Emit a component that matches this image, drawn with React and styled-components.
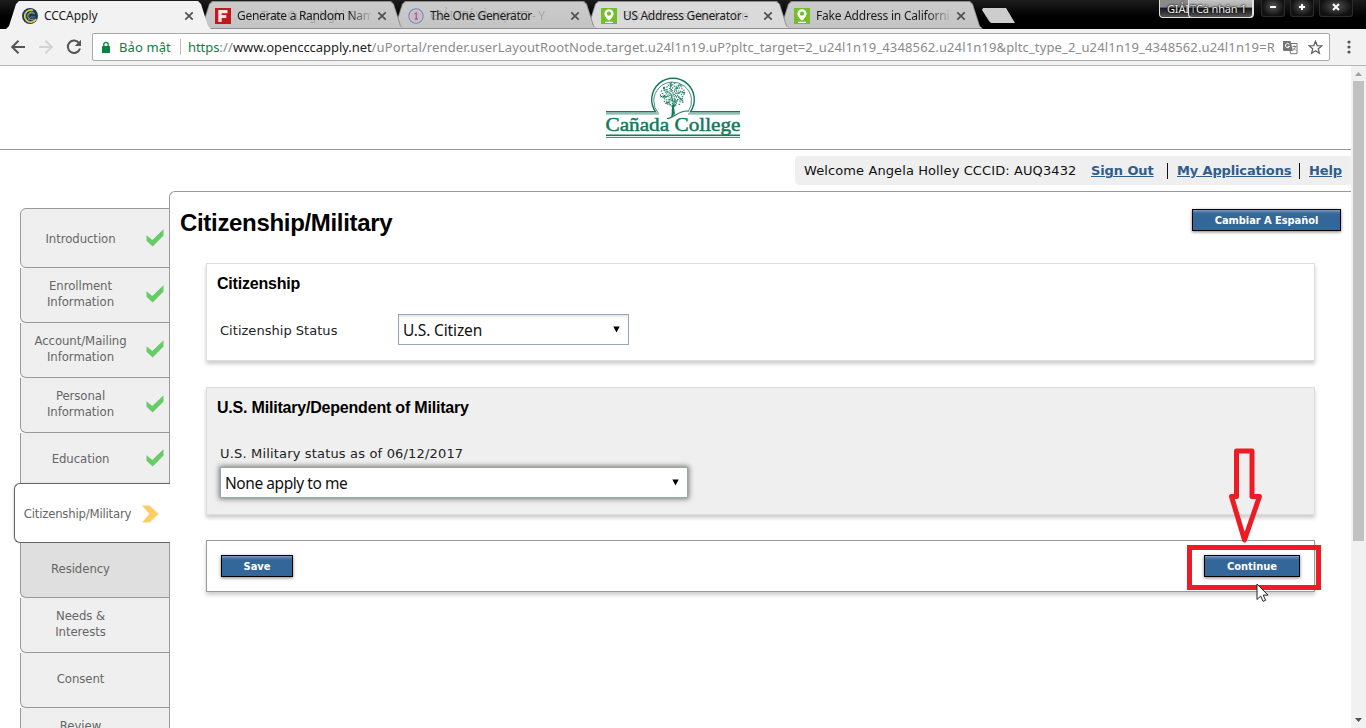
import React from "react";
import styled, { createGlobalStyle, css } from "styled-components";

const Global = createGlobalStyle`
  *{box-sizing:border-box}
  body{margin:0;background:#fff;overflow:hidden}
`;
const UI = `"Noto Sans","Open Sans",sans-serif`;
const TAHOMA = `"DejaVu Sans Condensed","DejaVu Sans",sans-serif`;
const VERDANA = `"DejaVu Sans",sans-serif`;
const ARIAL = `"Liberation Sans",Arial,sans-serif`;

const Screen = styled.div`
  position:relative;width:1366px;height:728px;overflow:hidden;
  display:flex;flex-direction:column;background:#fff;
`;

/* ---- tab strip ---- */
const TabStrip = styled.div`
  height:29px;flex:none;display:flex;align-items:flex-end;padding-left:6px;
  background:linear-gradient(#1c1c1c,#000 60%);
`;
const TabEdge = styled.div`
  width:205px;height:28px;flex:none;margin-right:-12px;position:relative;z-index:${p => p.$z};
  background:${p => (p.$active ? "#f2f2f2" : "#8e8e8e")};
  clip-path:polygon(0 100%,3px 25px,10px 3px,13px 0,192px 0,195px 3px,202px 25px,205px 100%);
`;
const TabFace = styled.div`
  height:28px;display:flex;align-items:center;padding:1px 16px 0 16px;
  background:${p => (p.$active ? "#f2f2f2" : p.$light ? "#dadada" : "linear-gradient(#cbcbcb,#c4c4c4)")};
  clip-path:${p => p.$active ? "none" : "polygon(1px 27px,4px 25px,11px 3px,14px 1px,191px 1px,194px 3px,201px 25px,204px 27px)"};
`;
const TabTitle = styled.div`
  position:relative;width:134px;height:18px;margin-left:6px;overflow:hidden;white-space:nowrap;
  font:12px/18px ${UI};color:#1c1c1c;letter-spacing:${p => p.$ls || 0}px;
  ${p => p.$fade && css`-webkit-mask-image:linear-gradient(90deg,#000 112px,transparent 136px);mask-image:linear-gradient(90deg,#000 112px,transparent 136px);`}
`;
const Ghost = styled.span`
  position:absolute;left:${p => p.$x}px;top:0;color:#000;opacity:.17;
`;
const CloseIcon = styled.svg`width:10px;height:10px;margin-left:6px;flex:none;`;
const NewTab = styled.div`
  width:33px;height:15px;margin:0 0 6px 11px;background:#cdcdcd;
  clip-path:polygon(0 2px,1px 0,24px 0,33px 100%,9px 100%,7px 13px);
`;
const WindowControls = styled.div`margin-left:auto;display:flex;align-items:flex-start;height:29px;padding-right:13px;`;
const ProfileGroup = styled.div`
  width:95px;height:18px;border:1px solid #e0e0e0;border-top:0;border-radius:0 0 4px 4px;display:flex;
  background:linear-gradient(#8a8a8a,#8a8a8a 40%,#1a1a1a 50%,#555);color:#eee;
  font:11px/17px ${UI};letter-spacing:-.15px;white-space:nowrap;text-shadow:0 0 2px #000,0 0 2px #000;padding-left:7px;margin-right:2px;
`;
const ProfileRest = styled.span`width:21px;flex:none;`;
const ProfileName = styled.div`
  width:65px;height:18px;margin-right:-1px;flex:none;border:1px solid #e0e0e0;border-top:0;border-radius:0 0 4px 4px;
  background:linear-gradient(#c4c4c4,#aaa 40%,#1a1a1a 50%,#555);
  display:flex;
`;
const ProfileTail = styled.span`width:7px;padding-left:1px;color:#bbb;`;
const WinButton = styled.div`
  width:${p => p.$w}px;height:17px;margin-left:5px;display:flex;justify-content:center;padding-top:2px;
  border:1px solid #2b2b2b;border-top:0;border-radius:0 0 3px 3px;background:radial-gradient(ellipse at 50% 40%,#555,#111 70%);
`;

/* ---- toolbar ---- */
const Toolbar = styled.div`
  height:37px;flex:none;display:flex;align-items:center;background:#f2f2f2;border-bottom:1px solid #b5b5b5;
  padding:0 0 0 10px;
`;
const NavIcon = styled.svg`width:16px;height:16px;flex:none;margin-right:12px;`;
const AddressBar = styled.div`
  width:1238px;height:28px;margin:0 0 0 -2px;border:1px solid #a9a9a9;border-radius:2px;background:#fff;
  display:flex;align-items:center;padding-left:8px;font:13px/26px ${UI};white-space:nowrap;
`;
const Secure = styled.span`color:#0b8043;margin-left:8px;width:53px;letter-spacing:${p => p.$ls}px;`;
const Divider = styled.i`width:1px;height:16px;background:#bdbdbd;margin:0 7px 0 8px;`;
const Url = styled.div`
  width:1087px;overflow:hidden;color:#8a8a8a;letter-spacing:${p => p.$ls}px;
  b{font-weight:400;color:#222;letter-spacing:-.06px}
  em{font-style:normal;color:#0b8043;letter-spacing:-.06px}
`;
const TranslateIcon = styled.svg`width:15px;height:15px;margin:0 10px 0 8px;flex:none;`;
const MenuDots = styled.svg`width:4px;height:14px;margin-left:17px;`;

/* ---- page ---- */
const Viewport = styled.div`flex:1;display:flex;min-height:0;`;
const Page = styled.div`width:1351px;display:flex;flex-direction:column;overflow:hidden;`;
const Scrollbar = styled.div`
  width:15px;background:#f1f1f1;display:flex;flex-direction:column;align-items:center;padding-top:6px;
`;
const Thumb = styled.div`width:11px;height:460px;margin-top:5px;background:#c1c1c1;`;
const DownArrow = styled.svg`width:7px;height:4px;margin-top:auto;margin-bottom:6px;`;
const Brand = styled.header`
  height:84px;flex:none;border-bottom:1px solid #999;padding:10px 0 0 604px;
`;
const AccountRow = styled.div`height:41px;flex:none;display:flex;justify-content:flex-end;padding-top:6px;`;
const Account = styled.div`
  width:556px;height:29px;background:#efefef;border-radius:4px 0 0 4px;display:flex;align-items:center;
  padding-left:9px;font:13px/29px ${VERDANA};color:#111;white-space:nowrap;
`;
const Welcome = styled.span`width:287px;letter-spacing:${p => p.$ls}px;`;
const AccountLink = styled.a`
  font-weight:700;color:#2f5d8c;text-decoration:underline;letter-spacing:${p => p.$ls}px;width:${p => p.$w}px;
`;
const Bar = styled.i`width:1px;height:16px;background:#111;margin-right:${p => p.$mr}px;`;

const Columns = styled.div`display:flex;flex:1;min-height:0;`;
const Steps = styled.nav`width:170px;padding:17px 0 0 14px;flex:none;position:relative;z-index:1;`;
const Step = styled.div`
  height:${p => p.$h}px;margin-left:${p => (p.$current ? 0 : 6)}px;
  display:flex;align-items:center;
  padding-bottom:${p => (p.$h === 55 ? 2 : 0)}px;padding-top:${p => (p.$h === 55 ? 0 : 1)}px;
  border:1px solid #999;border-top-width:${p => (p.$first || p.$current ? 1 : 0)}px;
  border-bottom-width:${p => (p.$beforeCurrent ? 0 : 1)}px;
  border-radius:${p => (p.$first || p.$current ? "6px" : "0")} 0 0 ${p => (p.$beforeCurrent ? "0" : "6px")};
  background:${p => (p.$current ? "#fff" : p.$next ? "#dfdfdf" : "#efefef")};
  ${p => p.$current && css`border-color:#666;border-right:0;box-shadow:-1px 0 2px rgba(0,0,0,.12);`}
`;
const StepLabel = styled.span`
  width:${p => (p.$current ? 125 : 119)}px;text-align:center;font:13px/16px ${TAHOMA};color:#666;white-space:pre-line;
  letter-spacing:${p => p.$ls}px;
`;
const StepMark = styled.svg`
  width:18px;height:18px;margin-left:${p => (p.$arrow ? 2 : 6)}px;flex:none;
  margin-bottom:${p => (p.$raised ? 0 : 2)}px;
`;

const Content = styled.main`
  flex:1;margin-left:-1px;border-top:1px solid #999;border-left:1px solid #999;border-radius:6px 0 0 0;
`;
const TitleRow = styled.div`height:71px;display:flex;justify-content:space-between;padding:17px 10px 0 10px;`;
const Title = styled.h1`margin:-1px 0 0;font:700 24px/30px ${ARIAL};color:#000;letter-spacing:${p => p.$ls}px;`;
const Button = styled.button`
  width:${p => p.$w}px;height:22px;padding:0;border:1px solid #000;border-radius:0;
  background:linear-gradient(#7ba0c4 0,#4c7aa8 2px,#336699 4px);color:#fff;
  box-shadow:0 1px 3px rgba(0,0,0,.5);font:700 11px/19px ${TAHOMA};letter-spacing:${p => p.$ls || 0}px;
`;
const Panel = styled.section`
  width:1109px;height:${p => p.$h}px;margin:0 0 ${p => p.$mb}px 36px;padding:10px 14px 0 10px;
  border:1px solid ${p => (p.$line ? "#999" : "#ddd")};background:${p => (p.$gray ? "#efefef" : "#fff")};
  box-shadow:0 3px 4px rgba(0,0,0,.2);
`;
const PanelTitle = styled.h2`margin:0;font:700 16px/20px ${ARIAL};color:#000;letter-spacing:${p => p.$ls}px;`;
const Field = styled.div`display:flex;align-items:center;margin-top:20px;padding-left:3px;`;
const Label = styled.label`
  font:13px/18px ${VERDANA};color:#222;letter-spacing:${p => p.$ls}px;width:178px;white-space:nowrap;
  ${p => p.$stacked ? css`display:block;margin:27px 0 4px 3px;` : css`padding-top:2px;`}
`;
const Select = styled.div`
  width:${p => p.$w}px;height:31px;border:1px solid #96a6bd;background:#fff;display:flex;align-items:center;
  justify-content:space-between;padding:0 8px 0 4px;font:15.5px/29px ${UI};color:#111;
  margin-left:${p => p.$ml || 0}px;
  box-shadow:${p => p.$focus ? "0 0 5px 1px #777" : "inset 0 2px 2px #e8e8e8"};
  span{letter-spacing:${p => p.$ls}px;padding-top:1px}
  svg{margin-bottom:1px}
`;
const Actions = styled.div`display:flex;justify-content:space-between;padding:4px 0 0 4px;`;

/* ---- annotation over the page ---- */
const Highlight = styled.div`
  position:absolute;left:1187px;top:545px;width:134px;height:45px;border:5px solid #ed1c24;z-index:5;
`;
const Arrow = styled.svg`position:absolute;left:1224px;top:444px;width:42px;height:104px;z-index:5;`;
const Cursor = styled.svg`position:absolute;left:1256px;top:583px;width:13px;height:20px;z-index:6;`;

const Globe = () => (
  <svg width="16" height="16" viewBox="0 0 16 16">
    <circle cx="8" cy="8" r="8" fill="#1b3c59" />
    <path d="M11 2.500A6 6 0 1 0 14 11" fill="none" stroke="#e2cf3a" strokeWidth="1.700" />
    <path d="M12.500 6A3.600 3.600 0 1 0 11.500 11" fill="none" stroke="#a9a84a" strokeWidth="1.100" />
    <path d="M5 8.500 8 5h4M6 12l3-3h4" fill="none" stroke="#7f97a0" strokeWidth=".8" />
  </svg>
);
const RedF = () => (
  <svg width="16" height="16" viewBox="0 0 16 16">
    <rect width="16" height="16" fill="#c4161c" />
    <path d="M3.300 2h9.200v3.300H6.700v1.600h4.600v3H6.700V14H3.300z" fill="#f4e6e6" />
  </svg>
);
const OneBadge = () => (
  <svg width="16" height="16" viewBox="0 0 16 16">
    <circle cx="8" cy="8" r="7.200" fill="#c9c2d0" stroke="#6d8cc7" strokeWidth="1.100" />
    <circle cx="8" cy="8" r="5" fill="#deb3b3" />
    <path d="M6.600 6 8.300 5v6M6.700 11.200h3.200" fill="none" stroke="#6272b5" strokeWidth="1.200" />
  </svg>
);
const PinBadge = () => (
  <svg width="16" height="16" viewBox="0 0 16 16">
    <rect width="16" height="16" fill="#72bf2b" />
    <path d="M8 1.200a4.600 4.600 0 0 0-4.600 4.600C3.400 9 8 12.800 8 12.800S12.600 9 12.600 5.800A4.600 4.600 0 0 0 8 1.200z" fill="#fff" />
    <circle cx="8" cy="5.700" r="2.100" fill="#72bf2b" />
    <path d="M4 14.300h8" stroke="#fff" strokeWidth="1.200" />
  </svg>
);

const TABS = [
  { icon: Globe, title: "CCCApply", active: true, ls: -0.05 },
  { icon: RedF, title: "Generate a Random Nam", ghost: "Tran Cung Nghi T", gx: 24, fade: true, ls: -0.3 },
  { icon: OneBadge, title: "The One Generator", ghost: "GIẢI TRÍ VÀ HỌC IT - Y", gx: 0, ls: -0.38 },
  { icon: PinBadge, title: "US Address Generator -", ghost: "Bạc Address Hindu - Go", gx: 0, light: true, ls: -0.32 },
  { icon: PinBadge, title: "Fake Address in Californi", fade: true, ls: -0.22 },
];

const Tab = ({ tab, index }) => {
  const Icon = tab.icon;
  return (
    <TabEdge $active={tab.active} $z={9 - index}>
      <TabFace $active={tab.active} $light={tab.light}>
        <Icon />
        <TabTitle $fade={tab.fade} $ls={tab.ls}>
          {tab.ghost && <Ghost $x={tab.gx}>{tab.ghost}</Ghost>}
          {tab.title}
        </TabTitle>
        <CloseIcon viewBox="0 0 10 10"><path d="M1.300 1.300l7.400 7.400M8.700 1.300L1.300 8.700" stroke="#505050" strokeWidth="1.700" /></CloseIcon>
      </TabFace>
    </TabEdge>
  );
};

const LEAVES = Array.from({ length: 130 }, (_, i) => {
  const a = i * 2.39996 + Math.sin(i * 12.9) * 0.12;
  const r = Math.sqrt((i + 1) / 130) * 12.3 + Math.sin(i * 5.3) * 0.4;
  return [69 + Math.cos(a) * r, 18.5 + Math.sin(a) * r * 0.97, i * 83];
});
const CollegeLogo = () => (
  <svg width="138" height="66" viewBox="0 0 138 66" fill="none" stroke="#15795a">
    <path d="M2 35.700H51.500A21.300 21.300 0 1 1 86.500 35.700H136" strokeWidth="1.400" />
    <path d="M2 37.900H54.500M54.500 37.500A18.900 18.900 0 1 1 84 36M84 37.900H136" strokeWidth=".8" />
    {LEAVES.map(([x, y, deg], i) => (
      <ellipse key={i} cx={x} cy={y} rx="1" ry=".5" transform={`rotate(${deg} ${x} ${y})`} fill="#15795a" stroke="none" />
    ))}
    <path d="M69 38V24M69 32l-5-6M69 29l5-6M69 26l-2-8" strokeWidth=".8" />
    <path d="M67.300 41l.9-12h1.700l1 9z" fill="#15795a" stroke="none" />
    <path d="M63 42.500C70 42 74 34.500 84 35" strokeWidth="1.200" />
    <text x="1.500" y="55" textLength="135" lengthAdjust="spacingAndGlyphs" fill="#15795a" stroke="#15795a" strokeWidth=".5" fontFamily="Liberation Serif, serif" fontSize="19.500">Cañada College</text>
    <path d="M2 59.200H136" strokeWidth="1.400" />
    <path d="M2 61.400H136" strokeWidth=".9" />
  </svg>
);

const STEPS = [
  { label: "Introduction", h: 60, done: true, first: true },
  { label: "Enrollment\nInformation", h: 55, done: true },
  { label: "Account/Mailing\nInformation", h: 55, done: true },
  { label: "Personal\nInformation", h: 55, done: true },
  { label: "Education", h: 50, done: true, before: true },
  { label: "Citizenship/Military", h: 60, current: true, ls: -0.2 },
  { label: "Residency", h: 55, next: true },
  { label: "Needs &\nInterests", h: 55 },
  { label: "Consent", h: 55 },
  { label: "Review", h: 36 },
];

const Caret = () => <svg width="7" height="7" viewBox="0 0 7 7"><path d="M.3.500h6.400L3.500 6.500z" fill="#000" /></svg>;

export default function App() {
  return (
    <Screen>
      <Global />
      <TabStrip>
        {TABS.map((t, i) => <Tab key={i} tab={t} index={i} />)}
        <NewTab />
        <WindowControls>
          <ProfileGroup>
            <ProfileRest>GIẢI</ProfileRest>
            <ProfileName><ProfileTail>T</ProfileTail>Cá nhân 1</ProfileName>
          </ProfileGroup>
          <WinButton $w={24}><svg width="10" height="10"><path d="M2 5h6" stroke="#fff" strokeWidth="2" /></svg></WinButton>
          <WinButton $w={24}><svg width="10" height="10"><path d="M2 5h6M5 2v6" stroke="#fff" strokeWidth="2" /></svg></WinButton>
          <WinButton $w={34}><svg width="10" height="10"><path d="M2 2l6 6M8 2L2 8" stroke="#fff" strokeWidth="2" /></svg></WinButton>
        </WindowControls>
      </TabStrip>

      <Toolbar>
        <NavIcon viewBox="0 0 16 16"><path d="M15 8H2.500M8.500 1.800L2.200 8l6.300 6.200" fill="none" stroke="#555" strokeWidth="2" /></NavIcon>
        <NavIcon viewBox="0 0 16 16"><path d="M1 8h12.500M7.500 1.800L13.800 8l-6.300 6.200" fill="none" stroke="#d3d3d3" strokeWidth="2" /></NavIcon>
        <NavIcon viewBox="0 0 16 16"><path d="M13.200 4.200A6.200 6.200 0 1 0 14 9.500" fill="none" stroke="#555" strokeWidth="2" /><path d="M15 .8V7H8.800z" fill="#555" /></NavIcon>
        <AddressBar>
          <svg width="10" height="13" viewBox="0 0 10 13"><rect x="1" y="5" width="8" height="7" rx=".6" fill="#0b8043" /><path d="M2.800 5.500V3.500a2.200 2.200 0 0 1 4.400 0v2" fill="none" stroke="#0b8043" strokeWidth="1.300" /></svg>
          <Secure $ls={0.1}>Bảo mật</Secure>
          <Divider />
          <Url $ls={0.13}><em>https</em>://<b>www.opencccapply.net</b>/uPortal/render.userLayoutRootNode.target.u24l1n19.uP?pltc_target=2_u24l1n19_4348562.u24l1n19&amp;pltc_type_2_u24l1n19_4348562.u24l1n19=R</Url>
          <TranslateIcon viewBox="0 0 15 15">
            <path d="M6 3.500h8v10.200H7.500z" fill="#fff" stroke="#757575" />
            <path d="M0 1h7.500L10 11H1a1 1 0 0 1-1-1z" fill="#757575" />
            <path d="M6.300 4.300a2.100 2.100 0 1 0 .3 2H4.700" fill="none" stroke="#fff" strokeWidth="1" />
            <path d="M9.500 6.500h3.700M11.300 5.500v1M12.500 6.500c-.4 2-1.500 3-2.500 3.800M10.500 8l2.500 2.500" stroke="#757575" strokeWidth=".9" fill="none" />
          </TranslateIcon>
          <svg width="15" height="15" viewBox="0 0 15 15"><path d="M7.500 1.300l1.700 4.300 4.600.3-3.500 2.900 1.100 4.500-3.900-2.500-3.900 2.500 1.100-4.500L1.200 5.900l4.600-.3z" fill="none" stroke="#616161" strokeWidth="1.300" /></svg>
        </AddressBar>
        <MenuDots viewBox="0 0 4 14"><circle cx="2" cy="2" r="1.600" fill="#555" /><circle cx="2" cy="7" r="1.600" fill="#555" /><circle cx="2" cy="12" r="1.600" fill="#555" /></MenuDots>
      </Toolbar>

      <Viewport>
        <Page>
          <Brand><CollegeLogo /></Brand>
          <AccountRow>
            <Account>
              <Welcome $ls={0.1}>Welcome Angela Holley CCCID: AUQ3432</Welcome>
              <AccountLink $w={76} $ls={-0.1}>Sign Out</AccountLink><Bar $mr={9} />
              <AccountLink $w={122} $ls={-0.15}>My Applications</AccountLink><Bar $mr={9} />
              <AccountLink $w={40} $ls={-0.15}>Help</AccountLink>
            </Account>
          </AccountRow>
          <Columns>
            <Steps>
              {STEPS.map(s => (
                <Step key={s.label} $h={s.h} $first={s.first} $current={s.current} $beforeCurrent={s.before} $next={s.next}>
                  <StepLabel $current={s.current} $ls={s.ls || -0.06}>{s.label}</StepLabel>
                  {s.done && <StepMark $raised={s.h === 55} viewBox="0 0 18 18"><path d="M.5 6.200L6.300 11 17.500.3v6.200L6.700 17.500.5 11.800z" fill="#66cc66" /></StepMark>}
                  {s.current && <StepMark $raised $arrow viewBox="0 0 18 18"><path d="M0 .5h7.500L16.500 9l-9 8.500H0L7.300 9z" fill="#ffcc66" /></StepMark>}
                </Step>
              ))}
            </Steps>
            <Content>
              <TitleRow>
                <Title $ls={-0.32}>Citizenship/Military</Title>
                <Button $w={149} $ls={-0.05}>Cambiar A Español</Button>
              </TitleRow>
              <Panel $h={98} $mb={26}>
                <PanelTitle $ls={-0.2}>Citizenship</PanelTitle>
                <Field>
                  <Label $ls={0.03}>Citizenship Status</Label>
                  <Select $w={231} $ls={-0.15}><span>U.S. Citizen</span><Caret /></Select>
                </Field>
              </Panel>
              <Panel $h={128} $mb={25} $gray>
                <PanelTitle $ls={-0.2}>U.S. Military/Dependent of Military</PanelTitle>
                <Label $stacked $ls={0.17}>U.S. Military status as of 06/12/2017</Label>
                <Select $w={468} $ml={3} $focus $ls={-0.44}><span>None apply to me</span><Caret /></Select>
              </Panel>
              <Panel $h={52} $mb={0} $line>
                <Actions><Button $w={72}>Save</Button><Button $w={96}>Continue</Button></Actions>
              </Panel>
            </Content>
          </Columns>
        </Page>
        <Scrollbar>
          <svg width="7" height="4" viewBox="0 0 7 4"><path d="M0 4h7L3.500 0z" fill="#a0a0a0" /></svg>
          <Thumb />
          <DownArrow viewBox="0 0 7 4"><path d="M0 0h7L3.500 4z" fill="#505050" /></DownArrow>
        </Scrollbar>
      </Viewport>

      <Arrow viewBox="0 0 42 104"><path d="M12.500 7h15.500v45.500h7.500L20.500 96 7.500 52.500h5z" fill="none" stroke="#ed1c24" strokeWidth="5" strokeLinejoin="round" /></Arrow>
      <Highlight />
      <Cursor viewBox="0 0 13 20"><path d="M1 1v15.500l3.700-3.400 2.400 5.300 2.500-1.100-2.400-5.200H12z" fill="#fff" stroke="#222" strokeWidth="1" /></Cursor>
    </Screen>
  );
}
